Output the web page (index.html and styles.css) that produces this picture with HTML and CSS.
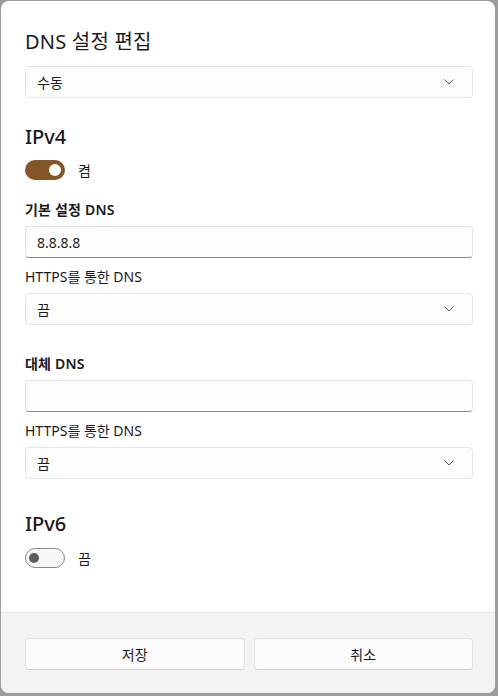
FILE: index.html
```html
<!DOCTYPE html>
<html lang="ko">
<head>
<meta charset="utf-8">
<link rel="stylesheet" href="styles.css">
</head>
<body>
<div class="dialog">
  <div class="content">
    <h1 class="title">DNS 설정 편집</h1>
    <div class="select mt-10"><span>수동</span><svg class="chev" width="10" height="6" viewBox="0 0 10 6"><path d="M0.5 0.5 L5 5 L9.5 0.5" fill="none" stroke="#5c5c5c" stroke-width="1"/></svg></div>

    <h2 class="section mt-ipv4">IPv4</h2>
    <div class="toggle-row mt-toggle">
      <span class="toggle on"><span class="knob"></span></span>
      <span class="toggle-label">켬</span>
    </div>

    <div class="label bold mt-20">기본 설정 DNS</div>
    <div class="input mt-6">8.8.8.8</div>
    <div class="label mt-9">HTTPS를 통한 DNS</div>
    <div class="select mt-6"><span>끔</span><svg class="chev" width="10" height="6" viewBox="0 0 10 6"><path d="M0.5 0.5 L5 5 L9.5 0.5" fill="none" stroke="#5c5c5c" stroke-width="1"/></svg></div>

    <div class="label bold mt-29">대체 DNS</div>
    <div class="input mt-6"></div>
    <div class="label mt-9">HTTPS를 통한 DNS</div>
    <div class="select mt-6"><span>끔</span><svg class="chev" width="10" height="6" viewBox="0 0 10 6"><path d="M0.5 0.5 L5 5 L9.5 0.5" fill="none" stroke="#5c5c5c" stroke-width="1"/></svg></div>

    <h2 class="section mt-ipv6">IPv6</h2>
    <div class="toggle-row mt-toggle6">
      <span class="toggle off"><span class="knob"></span></span>
      <span class="toggle-label">끔</span>
    </div>
  </div>
  <div class="footer">
    <button class="btn">저장</button>
    <button class="btn">취소</button>
  </div>
</div>
</body>
</html>
```

FILE: styles.css
```css
* { box-sizing: border-box; }
html, body { margin: 0; padding: 0; }
body {
  width: 498px;
  height: 696px;
  background: #9f9c99;
  font-family: "Noto Sans", "Noto Sans CJK KR", sans-serif;
  color: #1a1a1a;
  overflow: hidden;
  padding: 1px 3px 3px 1px;
}
.dialog {
  width: 494px;
  height: 692px;
  background: #ffffff;
  border-radius: 8px;
  overflow: hidden;
  display: flex;
  flex-direction: column;
}
.content {
  flex: 1;
  padding: 27px 22px 0 24px;
  display: flex;
  flex-direction: column;
}
.title {
  margin: 0;
  font-size: 20px;
  line-height: 28px;
  font-weight: 400;
  letter-spacing: 0.2px;
}
.section {
  margin: 0;
  font-size: 20px;
  line-height: 28px;
  font-weight: 500;
}
.select, .input {
  height: 32px;
  border: 1px solid #e5e5e5;
  border-radius: 4px;
  background: #fdfdfd;
  display: flex;
  align-items: center;
  padding: 0 11px 0 11px;
  font-size: 14px;
  font-family: "Noto Sans CJK KR", sans-serif;
}
.select { justify-content: space-between; padding-right: 18px; }
.input {
  border-bottom: 1px solid #8a8a8a;
  font-family: "Noto Sans", "Noto Sans CJK KR", sans-serif;
  color: #1f1f1f;
}
.chev { display: block; }
.label {
  font-size: 14px;
  line-height: 20px;
  color: #1a1a1a;
}
.label.bold { font-weight: 600; letter-spacing: 0.2px; }
.toggle-row {
  display: flex;
  align-items: center;
  height: 20px;
}
.toggle {
  width: 40px;
  height: 20px;
  border-radius: 10px;
  display: flex;
  align-items: center;
  padding: 0 4px;
}
.toggle.on { background: #835527; justify-content: flex-end; }
.toggle.on .knob { width: 12px; height: 12px; border-radius: 50%; background: #fff; }
.toggle.off { border: 1px solid #8a8a8a; background: #f7f7f7; justify-content: flex-start; }
.toggle.off .knob { width: 10px; height: 10px; border-radius: 50%; background: #5d5d5d; margin-left: -1px; }
.toggle-label {
  margin-left: 13px;
  font-size: 14px;
  font-family: "Noto Sans CJK KR", sans-serif;
}
.footer {
  height: 81px;
  background: #f3f3f3;
  border-top: 1px solid #e5e5e5;
  padding: 25px 22px 0 24px;
  display: flex;
  gap: 9px;
}
.btn {
  flex: 1;
  height: 32px;
  border: 1px solid #e2e2e2;
  border-bottom-color: #cfcfcf;
  border-radius: 4px;
  background: #fbfbfb;
  font-size: 14px;
  font-family: "Noto Sans CJK KR", sans-serif;
  color: #1a1a1a;
  padding: 0;
}
.mt-6 { margin-top: 6px; }
.mt-9 { margin-top: 9px; }
.mt-10 { margin-top: 10px; }
.mt-20 { margin-top: 20px; }
.mt-29 { margin-top: 29px; }
.mt-ipv4 { margin-top: 25px; }
.mt-toggle { margin-top: 9px; }
.mt-ipv6 { margin-top: 31px; }
.mt-toggle6 { margin-top: 10px; }
```
